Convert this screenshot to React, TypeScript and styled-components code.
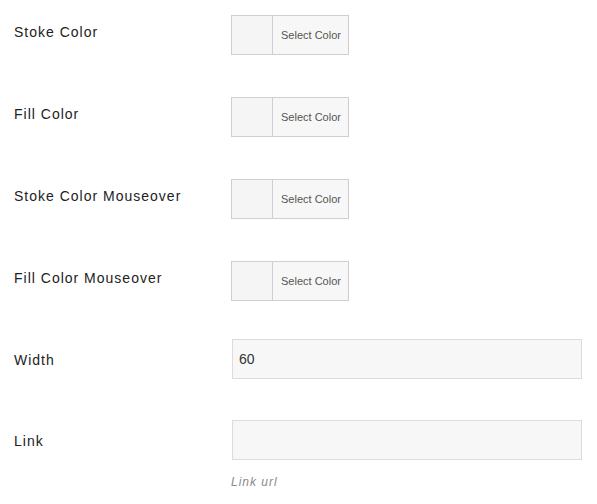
import { FC } from 'react';
import styled, { createGlobalStyle } from 'styled-components';

const GlobalStyle = createGlobalStyle`
  body {
    margin: 0;
    background-color: #fff;
    font-family: 'Liberation Sans', Arial, sans-serif;
  }
`;

const colorFields = ['Stoke Color', 'Fill Color', 'Stoke Color Mouseover', 'Fill Color Mouseover'];

const App: FC = () => {
  return (
    <>
      <GlobalStyle />
      <Form>
        {colorFields.map((item, idx) => (
          <Row key={item} $height={idx === colorFields.length - 1 ? 78 : 82}>
            <Label $offset={7}>{item}</Label>
            <ColorPicker>
              <Swatch />
              <SelectButton type="button">Select Color</SelectButton>
            </ColorPicker>
          </Row>
        ))}

        <Row $height={81}>
          <Label $offset={11}>Width</Label>
          <Field>
            <TextInput defaultValue="60" />
          </Field>
        </Row>

        <Row $height={84}>
          <Label $offset={11}>Link</Label>
          <Field>
            <TextInput defaultValue="" />
            <Hint>Link url</Hint>
          </Field>
        </Row>
      </Form>
    </>
  );
};

export default App;

const Form = styled.div`
  width: 597px;
  padding: 15px 0 0 14px;
  box-sizing: border-box;
  display: flex;
  flex-direction: column;
`;

const Row = styled.div<{ $height: number }>`
  display: grid;
  grid-template-columns: 217px 351px;
  height: ${({ $height }) => $height}px;
`;

const Label = styled.label<{ $offset: number }>`
  padding-top: ${({ $offset }) => $offset}px;
  font-size: 14px;
  line-height: 20px;
  letter-spacing: 1px;
  color: #222;
`;

const ColorPicker = styled.div`
  display: flex;
  width: 118px;
  height: 40px;
  box-sizing: border-box;
  border: 1px solid #cfcfcf;
  background-color: #f7f7f7;
`;

const Swatch = styled.span`
  width: 40px;
  border-right: 1px solid #cfcfcf;
  background-color: #f5f5f5;
`;

const SelectButton = styled.button`
  flex: 1;
  padding: 0 0 0 1px;
  border: none;
  background: transparent;
  font-family: 'Liberation Sans', Arial, sans-serif;
  font-size: 11px;
  color: #555;
  cursor: pointer;
`;

const Field = styled.div`
  display: flex;
  flex-direction: column;
  padding-left: 1px;
`;

const TextInput = styled.input`
  width: 350px;
  height: 40px;
  box-sizing: border-box;
  padding: 0 6px;
  border: 1px solid #dcdcdc;
  background-color: #f7f7f7;
  font-family: 'Liberation Sans', Arial, sans-serif;
  font-size: 14px;
  color: #333;
  outline: none;
`;

const Hint = styled.span`
  margin-top: 15px;
  margin-left: -1px;
  font-size: 12px;
  font-style: italic;
  letter-spacing: 1px;
  color: #8a8a8a;
`;
